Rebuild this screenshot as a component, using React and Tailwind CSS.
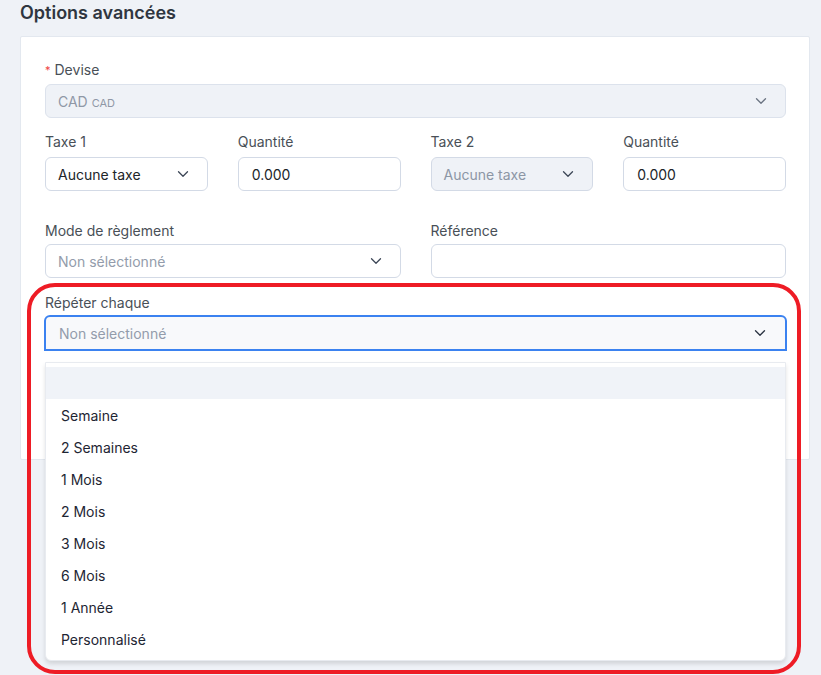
import React from "react";

const Chevron = ({ className = "" }) => (
  <svg width="12" height="8" viewBox="0 0 12 8" fill="none" className={className}>
    <path d="M1.5 1.75 L6 6.25 L10.5 1.75" stroke="currentColor" strokeWidth="1.3" strokeLinecap="round" strokeLinejoin="round" />
  </svg>
);

const Label = ({ children, mb = "mb-[4px]" }) => (
  <div className={`text-[14px] leading-[20px] text-[#495057] ${mb}`}>{children}</div>
);

const Select = ({ value, placeholder, disabled, className = "" }) => (
  <div
    className={`h-[34px] flex items-center justify-between pl-[12px] pr-[18px] rounded-[6px] border border-[#d3dae6] text-[14px] ${
      disabled ? "bg-[#eff2f7] text-[#8c96a5]" : "bg-white text-[#212529]"
    } ${className}`}
  >
    <span className={placeholder ? "text-[#939cab]" : ""}>{value}</span>
    <Chevron className="text-[#3d4757]" />
  </div>
);

const Input = ({ value }) => (
  <div className="h-[34px] flex items-center px-[13px] rounded-[6px] border border-[#d3dae6] bg-white text-[14px] text-[#212529]">
    {value}
  </div>
);

const options = ["Semaine", "2 Semaines", "1 Mois", "2 Mois", "3 Mois", "6 Mois", "1 Année", "Personnalisé"];

export default function App() {
  return (
    <div
      className="relative w-[821px] h-[675px] overflow-hidden bg-[#eff2f7]"
      style={{ fontFamily: "Inter, 'Noto Sans', sans-serif" }}
    >
      <h2 className="pl-[20px] pt-[1px] text-[18px] leading-[24px] font-semibold text-[#2f3640]">Options avancées</h2>
      <div className="mt-[11px] ml-[20px] w-[790px] h-[424px] bg-white border border-[#e3e8ef] rounded-[2px] pt-[23px] pl-[24px] pr-[23px]">
        <Label>
          <span className="text-[#ef4444] text-[11px] mr-[4px] align-top">*</span>Devise
        </Label>
        <div className="h-[34px] flex items-center justify-between pl-[12px] pr-[18px] rounded-[6px] border border-[#dce2ec] bg-[#eff2f7]">
          <span className="text-[14px] text-[#8f98a6]">
            CAD <span className="text-[11px]">CAD</span>
          </span>
          <Chevron className="text-[#6b7482]" />
        </div>

        <div className="grid grid-cols-4 gap-x-[30px] mt-[14px]">
          <div>
            <Label mb="mb-[5px]">Taxe 1</Label>
            <Select value="Aucune taxe" />
          </div>
          <div>
            <Label mb="mb-[5px]">Quantité</Label>
            <Input value="0.000" />
          </div>
          <div>
            <Label mb="mb-[5px]">Taxe 2</Label>
            <Select value="Aucune taxe" disabled />
          </div>
          <div>
            <Label mb="mb-[5px]">Quantité</Label>
            <Input value="0.000" />
          </div>
        </div>

        <div className="grid grid-cols-2 gap-x-[30px] mt-[30px]">
          <div>
            <Label mb="mb-[3px]">Mode de règlement</Label>
            <Select value="Non sélectionné" placeholder />
          </div>
          <div>
            <Label mb="mb-[3px]">Référence</Label>
            <Input value="" />
          </div>
        </div>

        <div className="relative mt-[15px]">
          <div className="text-[14px] leading-[20px] text-[#495057] mb-[2px]">Répéter chaque</div>
          <div className="-mx-[1px] h-[36px] flex items-center justify-between pl-[13px] pr-[19px] rounded-t-[6px] border-2 border-[#3b82f0] bg-[#f8f9fb] text-[14px]">
            <span className="text-[#939cab]">Non sélectionné</span>
            <Chevron className="text-[#2b3442]" />
          </div>
          <div className="absolute left-0 right-0 top-[69px] z-10 bg-white border border-[#e8ebf0] rounded-b-[6px] shadow-[0_3px_4px_rgba(0,0,0,0.12)] pt-[4px] pb-[5px]">
            <div className="h-[32px] bg-[#f0f3f8]"></div>
            {options.map((o) => (
              <div key={o} className="h-[32px] flex items-center pl-[15px] text-[14px] text-[#1e2533]">
                {o}
              </div>
            ))}
          </div>
        </div>
      </div>

      <div className="absolute left-[27px] top-[283px] w-[774px] h-[391px] rounded-[28px] border-[4px] border-[#ee1c25] z-20 pointer-events-none"></div>
    </div>
  );
}
